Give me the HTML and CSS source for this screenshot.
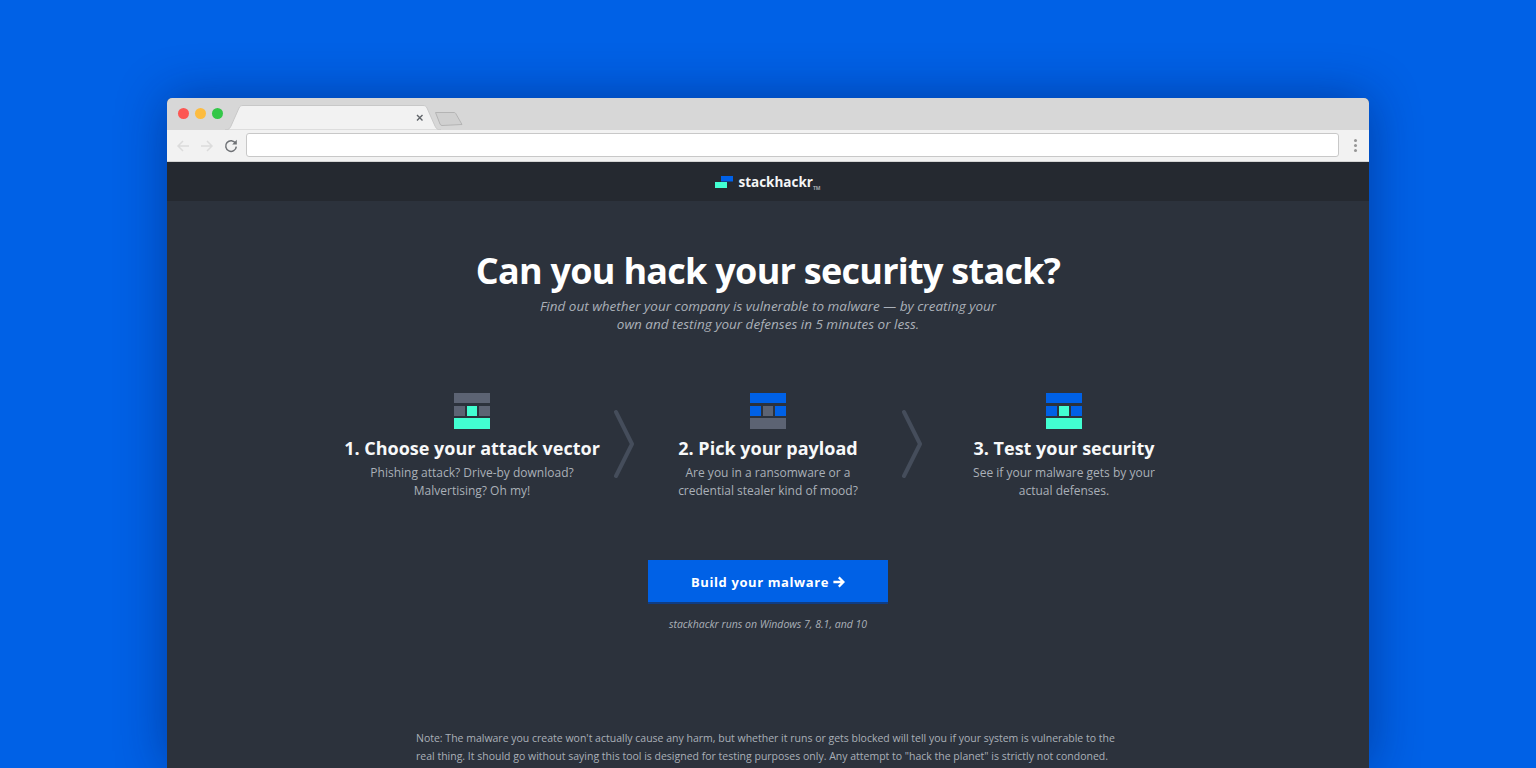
FILE: index.html
```html
<!DOCTYPE html>
<html lang="en">
<head>
    <meta charset="UTF-8">
    <meta name="viewport" content="width=device-width, initial-scale=1.0">
    <title>stackhackr</title>
    <link rel="stylesheet" href="styles.css">
</head>
<body>
    <div class="window">
        <!-- Browser chrome -->
        <div class="tabbar">
            <div class="lights">
                <span class="light red"></span>
                <span class="light yellow"></span>
                <span class="light green"></span>
            </div>
            <svg class="tab" width="216" height="25" viewBox="0 0 216 25">
                <path d="M0 25 C4 25 5 23 6 21 L14 3 C15 1 16 .5 18 .5 L198 .5 C200 .5 201 1 202 3 L210 21 C211 23 212 25 216 25 Z" fill="#f2f2f2" stroke="#c8c8c8" stroke-width="1"/>
                <path d="M192 10 L197.5 15.5 M197.5 10 L192 15.5" stroke="#5f6368" stroke-width="1.4" fill="none"/>
            </svg>
            <svg class="newtab" width="30" height="16" viewBox="0 0 30 16">
                <path d="M1.5 1.5 L20 1.5 C21 1.5 21.5 2 22 3 L28 13.5 L8 14.5 C7 14.5 6.5 14 6 13 Z" fill="#d0d0d0" stroke="#b4b4b4" stroke-width="1"/>
            </svg>
        </div>
        <div class="toolbar">
            <svg class="tool-icon" width="14" height="14" viewBox="0 0 14 14"><path d="M13 7 H2 M7 2 L2 7 L7 12" fill="none" stroke="#dcdcdc" stroke-width="1.5"/></svg>
            <svg class="tool-icon" width="14" height="14" viewBox="0 0 14 14"><path d="M1 7 H12 M7 2 L12 7 L7 12" fill="none" stroke="#dcdcdc" stroke-width="1.5"/></svg>
            <svg class="tool-icon" width="14" height="14" viewBox="0 0 14 14"><path d="M11.6 4.4 A5.3 5.3 0 1 0 12.3 7.6" fill="none" stroke="#6f7276" stroke-width="1.5"/><path d="M12.8 .8 V5.4 H8.2 Z" fill="#6f7276"/></svg>
            <div class="addressbar"></div>
            <div class="menu-dots"><span></span><span></span><span></span></div>
        </div>

        <!-- Site header -->
        <header class="site-nav">
            <svg class="logo" width="18" height="12" viewBox="0 0 18 12">
                <rect x="6" y="0" width="12" height="5.5" fill="#0061e8"/>
                <rect x="0" y="6" width="12" height="6" fill="#42ffd2"/>
            </svg>
            <span class="brand">stackhackr</span><span class="tm">TM</span>
        </header>

        <main class="content">
            <h1>Can you hack your security stack?</h1>
            <p class="lead">Find out whether your company is vulnerable to malware — by creating your<br>own and testing your defenses in 5 minutes or less.</p>

            <div class="steps">
                <div class="step">
                    <div class="stack">
                        <span class="full grey"></span>
                        <span class="cell grey"></span><span class="cell mint"></span><span class="cell grey"></span>
                        <span class="full mint"></span>
                    </div>
                    <h2>1. Choose your attack vector</h2>
                    <p>Phishing attack? Drive-by download?<br>Malvertising? Oh my!</p>
                </div>
                <div class="chevron chevron-one">
                    <svg width="20" height="68" viewBox="0 0 20 68"><path d="M2 2 L18 34 L2 66" fill="none" stroke="#454d5b" stroke-width="4" stroke-linecap="round" stroke-linejoin="round"/></svg>
                </div>
                <div class="step">
                    <div class="stack">
                        <span class="full blue"></span>
                        <span class="cell blue"></span><span class="cell grey"></span><span class="cell blue"></span>
                        <span class="full grey"></span>
                    </div>
                    <h2>2. Pick your payload</h2>
                    <p>Are you in a ransomware or a<br>credential stealer kind of mood?</p>
                </div>
                <div class="chevron chevron-two">
                    <svg width="20" height="68" viewBox="0 0 20 68"><path d="M2 2 L18 34 L2 66" fill="none" stroke="#454d5b" stroke-width="4" stroke-linecap="round" stroke-linejoin="round"/></svg>
                </div>
                <div class="step">
                    <div class="stack">
                        <span class="full blue"></span>
                        <span class="cell blue"></span><span class="cell mint"></span><span class="cell blue"></span>
                        <span class="full mint"></span>
                    </div>
                    <h2>3. Test your security</h2>
                    <p>See if your malware gets by your<br>actual defenses.</p>
                </div>
            </div>

            <a class="cta" href="#">Build your malware
                <svg width="12" height="12" viewBox="0 0 12 12"><path d="M6.6 .6 L12 6 L6.6 11.4 L5 9.8 L7.6 7.2 H.4 V4.8 H7.6 L5 2.2 Z" fill="#fff"/></svg>
            </a>
            <p class="platforms">stackhackr runs on Windows 7, 8.1, and 10</p>

            <p class="note">Note: The malware you create won't actually cause any harm, but whether it runs or gets blocked will tell you if your system is vulnerable to the real thing. It should go without saying this tool is designed for testing purposes only. Any attempt to "hack the planet" is strictly not condoned.</p>
        </main>
    </div>
</body>
</html>
```

FILE: styles.css
```css
* {
    margin: 0;
    padding: 0;
    box-sizing: border-box;
}

html, body {
    height: 768px;
    overflow: hidden;
}

body {
    background-color: #0061e6;
    font-family: "Open Sans", sans-serif;
    padding: 98px 167px 0;
}

/* Browser window */
.window {
    height: 670px;
    border-radius: 5px 5px 0 0;
    background-color: #2c323c;
    box-shadow: 0 0 50px rgba(0, 20, 80, 0.45);
    overflow: hidden;
}

.tabbar {
    height: 32px;
    background-color: #d7d7d7;
    display: flex;
    align-items: flex-end;
    padding-left: 11px;
}

.lights {
    display: flex;
    gap: 6px;
    align-self: flex-start;
    margin-top: 10px;
}

.light {
    width: 11px;
    height: 11px;
    border-radius: 50%;
}

.red { background-color: #fc5753; }
.yellow { background-color: #fdbc40; }
.green { background-color: #33c748; }

.tab {
    margin-left: 2px;
    display: block;
}

.newtab {
    margin: 0 0 3px -7px;
}

.toolbar {
    height: 32px;
    background-color: #f2f2f2;
    border-bottom: 1px solid #d4d4d4;
    display: flex;
    align-items: center;
    padding: 0 12px 2px 9px;
}

.tool-icon {
    margin: 2px 10px 0 0;
    flex-shrink: 0;
}

.addressbar {
    flex: 1;
    height: 24px;
    margin-left: -2px;
    background-color: #fff;
    border: 1px solid #c8c8c8;
    border-radius: 3px;
}

.menu-dots {
    display: flex;
    flex-direction: column;
    gap: 1.5px;
    margin: 2px 0 0 15px;
}

.menu-dots span {
    width: 3.5px;
    height: 3.5px;
    border-radius: 50%;
    background-color: #969696;
}

/* Site header */
.site-nav {
    height: 39px;
    background-color: #252930;
    display: flex;
    align-items: center;
    justify-content: center;
    padding-top: 1px;
}

.logo {
    margin-right: 5px;
}

.brand {
    font-size: 13.5px;
    font-weight: 700;
    color: #f4f5f6;
}

.tm {
    font-size: 5px;
    font-weight: 700;
    color: #a5a9b0;
    align-self: flex-end;
    margin: 0 0 10px 0;
}

/* Page content */
.content {
    display: flex;
    flex-direction: column;
    align-items: center;
    padding-top: 44px;
}

h1 {
    font-size: 36px;
    line-height: 52px;
    font-weight: 700;
    letter-spacing: -0.73px;
    color: #fff;
}

.lead {
    font-size: 13.5px;
    line-height: 18px;
    font-style: italic;
    color: #aab0b8;
    text-align: center;
}

.steps {
    display: flex;
    margin-top: 60px;
}

.step {
    width: 264px;
    text-align: center;
}

.stack {
    width: 36px;
    margin: 0 auto;
    display: grid;
    grid-template-columns: 1fr 1fr 1fr;
    column-gap: 2px;
    row-gap: 2.5px;
    grid-template-rows: 10px 10px 11px;
}

.stack .full {
    grid-column: 1 / -1;
}

.stack .grey { background-color: #5c6373; }
.stack .mint { background-color: #42ffd2; }
.stack .blue { background-color: #0061e6; }

.step h2 {
    font-size: 18px;
    line-height: 24px;
    font-weight: 700;
    color: #f7f8f9;
    margin-top: 7px;
}

.step p {
    font-size: 12px;
    line-height: 18px;
    color: #aab0b8;
    margin-top: 4px;
}

.chevron {
    width: 32px;
    padding-top: 17px;
}

.chevron-one { padding-left: 10px; }
.chevron-two { padding-left: 2px; }

.cta {
    display: flex;
    align-items: center;
    justify-content: center;
    gap: 4px;
    width: 240px;
    height: 44px;
    margin-top: 60px;
    padding-top: 1px;
    background-color: #0061e6;
    border-bottom: 2px solid #0f3d85;
    color: #fff;
    font-size: 13px;
    font-weight: 700;
    letter-spacing: 0.6px;
    text-decoration: none;
}

.platforms {
    font-size: 10.5px;
    line-height: 14px;
    font-style: italic;
    color: #aab0b8;
    margin-top: 13px;
}

.note {
    width: 704px;
    font-size: 10.5px;
    line-height: 18px;
    color: #aab0b8;
    margin-top: 98px;
}
```
